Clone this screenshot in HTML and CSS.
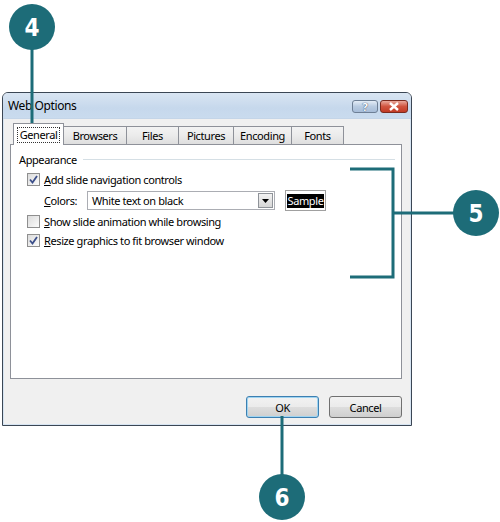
FILE: index.html
```html
<!DOCTYPE html>
<html lang="en">
<head>
    <meta charset="UTF-8">
    <title>Web Options</title>
    <link rel="stylesheet" href="styles.css">
</head>
<body>
    <div class="page">
        <div class="window">
            <div class="titlebar">
                <span class="title">Web Options</span>
                <div class="caption-buttons">
                    <span class="cap-btn help">?</span>
                    <span class="cap-btn close">
                        <svg width="12" height="9" viewBox="0 0 12 9"><path d="M2 1 L10 8 M10 1 L2 8" stroke="#fff" stroke-width="2.4"/></svg>
                    </span>
                </div>
            </div>
            <div class="body">
                <div class="tabs">
                    <div class="tab selected"><span class="focus">General</span></div>
                    <div class="tab">Browsers</div>
                    <div class="tab">Files</div>
                    <div class="tab">Pictures</div>
                    <div class="tab">Encoding</div>
                    <div class="tab">Fonts</div>
                </div>
                <div class="panel">
                    <div class="group-title"><span>Appearance</span></div>
                    <div class="row">
                        <span class="check on"><svg width="9" height="9" viewBox="0 0 9 9"><path d="M1 4.5 L3.5 7.5 L8 1" fill="none" stroke="#3c4f8a" stroke-width="1.8"/></svg></span>
                        <span><u>A</u>dd slide navigation controls</span>
                    </div>
                    <div class="row colors">
                        <span class="colors-label"><u>C</u>olors:</span>
                        <div class="select">
                            <span class="select-text">White text on black</span>
                            <span class="select-arrow"><svg width="7" height="4" viewBox="0 0 7 4"><path d="M0 0 H7 L3.5 4 Z" fill="#000"/></svg></span>
                        </div>
                        <div class="sample"><span>Sample</span></div>
                    </div>
                    <div class="row">
                        <span class="check"></span>
                        <span><u>S</u>how slide animation while browsing</span>
                    </div>
                    <div class="row">
                        <span class="check on"><svg width="9" height="9" viewBox="0 0 9 9"><path d="M1 4.5 L3.5 7.5 L8 1" fill="none" stroke="#3c4f8a" stroke-width="1.8"/></svg></span>
                        <span><u>R</u>esize graphics to fit browser window</span>
                    </div>
                </div>
                <div class="buttons">
                    <button class="btn default">OK</button>
                    <button class="btn">Cancel</button>
                </div>
            </div>
        </div>

        <!-- callouts drawn over the screenshot -->
        <svg class="callouts" width="500" height="522" viewBox="0 0 500 522">
            <g fill="#1d6c78" stroke="#1d6c78">
                <line x1="32" y1="48" x2="32" y2="123" stroke-width="3"/>
                <circle cx="32" cy="27" r="23" stroke="none"/>

                <path d="M350 169 H393 V277 H350" fill="none" stroke-width="3"/>
                <line x1="393" y1="213" x2="455" y2="213" stroke-width="3"/>
                <circle cx="476" cy="213" r="23" stroke="none"/>

                <line x1="282" y1="416" x2="282" y2="476" stroke-width="3"/>
                <circle cx="282" cy="497" r="23" stroke="none"/>
            </g>
            <g class="callout-num" fill="#fff">
                <text x="32" y="36">4</text>
                <text x="476" y="222">5</text>
                <text x="282" y="506">6</text>
            </g>
        </svg>
    </div>
</body>
</html>
```

FILE: styles.css
```css
body {
    margin: 0;
    background: #fff;
    font-family: "Noto Sans", "Open Sans", sans-serif;
    font-size: 11px;
    letter-spacing: -0.4px;
    color: #000;
}
.page {
    position: relative;
    width: 500px;
    height: 522px;
    padding: 92px 0 0 2px;
    box-sizing: border-box;
}
.window {
    width: 410px;
    height: 334px;
    box-sizing: border-box;
    border: 1px solid #3b4654;
    border-radius: 6px 6px 0 0;
    box-shadow: inset 0 0 0 1px #d6e4f2;
    background: #f0f0f0;
    display: flex;
    flex-direction: column;
    overflow: hidden;
}
.titlebar {
    height: 25px;
    flex: none;
    display: flex;
    align-items: center;
    justify-content: space-between;
    padding: 0 3px 0 5px;
    background: linear-gradient(#d9e5f2, #c6d8ec 60%, #c9dbee);
    border-bottom: 1px solid #c4d5e8;
}
.title {
    font-size: 12px;
    color: #000;
}
.caption-buttons {
    display: flex;
    gap: 2px;
    padding-top: 1px;
}
.cap-btn {
    height: 11px;
    border: 1px solid #6d7f95;
    border-radius: 3px;
    display: flex;
    align-items: center;
    justify-content: center;
}
.help {
    width: 24px;
    background: linear-gradient(#e4edf7, #b8cbe1 50%, #a7bdd8);
    color: #fff;
    font-weight: bold;
    font-size: 11px;
    line-height: 11px;
    text-shadow: 0 0 1px #3d5577, 0 0 1px #3d5577;
}
.close {
    width: 26px;
    border-color: #7a2a1e;
    background: linear-gradient(#e9a99c, #d0543f 50%, #c13b26);
}
.body {
    flex: 1;
    display: flex;
    flex-direction: column;
    padding: 4px 9px 0 7px;
}
.tabs {
    display: flex;
    align-items: flex-end;
    height: 21px;
    padding-left: 1px;
    position: relative;
    z-index: 1;
}
.tab {
    height: 18px;
    box-sizing: border-box;
    border: 1px solid #8e9199;
    border-bottom: none;
    margin-left: -1px;
    background: linear-gradient(#f3f3f3, #ebebeb 50%, #dedede);
    display: flex;
    align-items: center;
    justify-content: center;
    color: #000;
}
.tab:nth-child(2) { width: 63px; }
.tab:nth-child(3) { width: 53px; }
.tab:nth-child(4) { width: 56px; }
.tab:nth-child(5) { width: 59px; }
.tab:nth-child(6) { width: 53px; }
.tab.selected {
    width: 51px;
    height: 22px;
    margin-left: 2px;
    margin-bottom: -1px;
    background: #fff;
}
.tab.selected + .tab {
    margin-left: 0;
    border-left: none;
}
.focus {
    border: 1px dotted #333;
    padding: 0 2px 1px;
    line-height: 13px;
}
.panel {
    height: 235px;
    box-sizing: border-box;
    background: #fff;
    border: 1px solid #8e9199;
    padding: 6px 6px 0 8px;
}
.group-title {
    display: flex;
    align-items: center;
    gap: 6px;
    height: 16px;
    margin-bottom: 3px;
}
.group-title::after {
    content: "";
    flex: 1;
    border-top: 1px solid #d5dfe5;
}
.row {
    display: flex;
    align-items: center;
    gap: 4px;
    height: 19px;
    padding-left: 8px;
}
.check {
    width: 13px;
    height: 13px;
    box-sizing: border-box;
    border: 1px solid #8f8f8f;
    background: linear-gradient(135deg, #dcdcdc, #fbfbfb);
    display: flex;
    align-items: center;
    justify-content: center;
}
.row.colors {
    height: 23px;
    padding-left: 25px;
    gap: 0;
}
.colors-label {
    width: 43px;
}
.select {
    width: 188px;
    height: 19px;
    box-sizing: border-box;
    border: 1px solid #abadb3;
    display: flex;
    align-items: center;
    justify-content: space-between;
    padding: 0 1px 0 4px;
}
.select-arrow {
    width: 15px;
    height: 15px;
    box-sizing: border-box;
    border: 1px solid #8f9399;
    background: linear-gradient(#f2f2f2, #d6d6d6);
    display: flex;
    align-items: center;
    justify-content: center;
}
.sample {
    margin-left: 10px;
    width: 41px;
    height: 21px;
    box-sizing: border-box;
    border: 1px solid #a0a0a0;
    display: flex;
    align-items: center;
    justify-content: center;
}
.sample span {
    background: #000;
    color: #fff;
    padding: 0 1px;
    line-height: 14px;
}
.buttons {
    display: flex;
    justify-content: flex-end;
    gap: 10px;
    padding-top: 17px;
}
.btn {
    width: 73px;
    height: 22px;
    border: 1px solid #707070;
    border-radius: 3px;
    background: linear-gradient(#f2f2f2, #ebebeb 50%, #dddddd 51%, #cfcfcf);
    font-family: inherit;
    font-size: 11px;
    letter-spacing: inherit;
    color: #000;
    padding: 0;
}
.btn.default {
    border-color: #3c7fb1;
    box-shadow: inset 0 0 0 1px #9fd4f1;
}
.callouts {
    position: absolute;
    top: 0;
    left: 0;
}
.callout-num {
    font-family: "DejaVu Sans Condensed", "DejaVu Sans", sans-serif;
    font-weight: bold;
    font-size: 24px;
    letter-spacing: 0;
    text-anchor: middle;
}
```
